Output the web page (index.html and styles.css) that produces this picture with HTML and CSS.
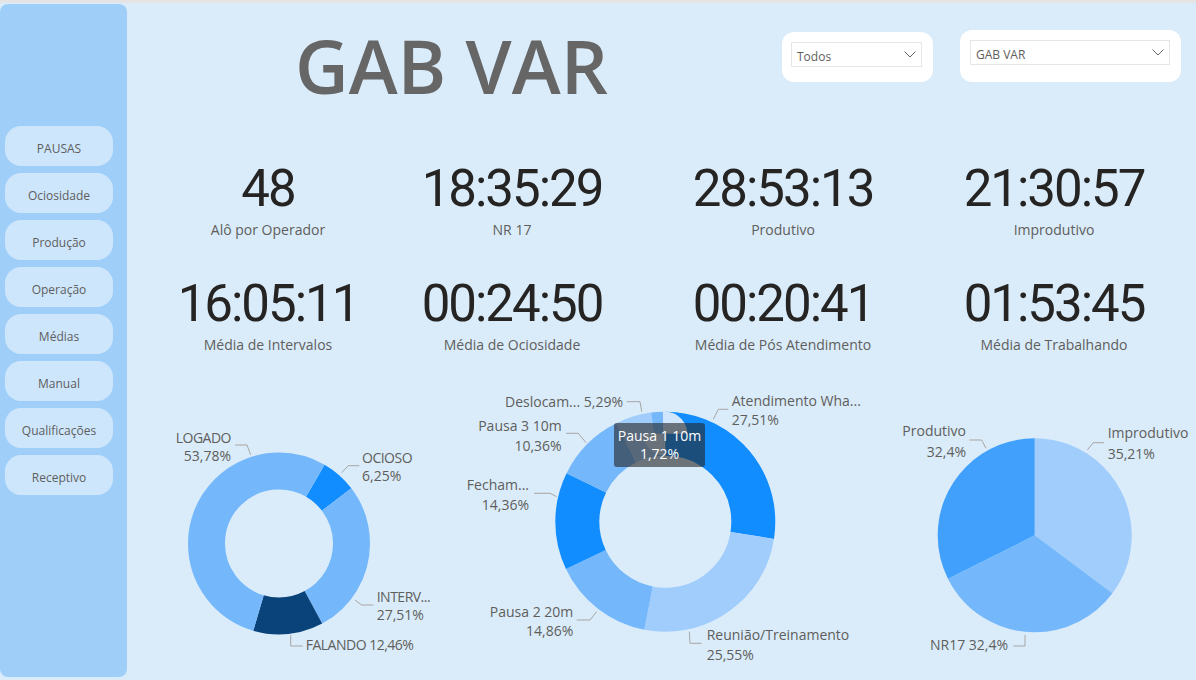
FILE: index.html
```html
<!DOCTYPE html>
<html lang="pt-BR">

<head>
  <meta charset="UTF-8">
  <meta name="viewport" content="width=device-width, initial-scale=1.0">
  <title>GAB VAR</title>
  <link rel="stylesheet" href="styles.css">
</head>

<body>
  <div class="app">
    <nav class="menu">
      <a class="menu-btn">PAUSAS</a>
      <a class="menu-btn">Ociosidade</a>
      <a class="menu-btn">Produção</a>
      <a class="menu-btn">Operação</a>
      <a class="menu-btn">Médias</a>
      <a class="menu-btn">Manual</a>
      <a class="menu-btn">Qualificações</a>
      <a class="menu-btn">Receptivo</a>
    </nav>

    <main class="painel">
      <header class="topo">
        <h1 class="titulo">GAB VAR</h1>
        <div class="filtro filtro-status">
          <div class="select">
            <span>Todos</span>
            <svg class="seta" width="12" height="7" viewBox="0 0 12 7"><path d="M0.5 0.5 L6 6 L11.5 0.5" /></svg>
          </div>
        </div>
        <div class="filtro filtro-grupo">
          <div class="select">
            <span>GAB VAR</span>
            <svg class="seta" width="12" height="7" viewBox="0 0 12 7"><path d="M0.5 0.5 L6 6 L11.5 0.5" /></svg>
          </div>
        </div>
      </header>

      <section class="kpis">
        <div class="kpi"><div class="valor">48</div><div class="rotulo">Alô por Operador</div></div>
        <div class="kpi"><div class="valor">18:35:29</div><div class="rotulo">NR 17</div></div>
        <div class="kpi"><div class="valor">28:53:13</div><div class="rotulo">Produtivo</div></div>
        <div class="kpi"><div class="valor">21:30:57</div><div class="rotulo">Improdutivo</div></div>
        <div class="kpi"><div class="valor">16:05:11</div><div class="rotulo">Média de Intervalos</div></div>
        <div class="kpi"><div class="valor">00:24:50</div><div class="rotulo">Média de Ociosidade</div></div>
        <div class="kpi"><div class="valor">00:20:41</div><div class="rotulo">Média de Pós Atendimento</div></div>
        <div class="kpi"><div class="valor">01:53:45</div><div class="rotulo">Média de Trabalhando</div></div>
      </section>

      <section class="graficos">
        <!-- status dos operadores -->
        <div class="grafico g-status">
          <svg width="300" height="300" viewBox="0 0 300 300">
            <g transform="rotate(-90 119 163.5)" fill="none" stroke-width="37">
              <circle cx="119" cy="163.5" r="72.5" pathLength="100" stroke="#118dff" stroke-dasharray="6.25 93.75" stroke-dashoffset="-8.36" />
              <circle cx="119" cy="163.5" r="72.5" pathLength="100" stroke="#74b7fb" stroke-dasharray="27.51 72.49" stroke-dashoffset="-14.61" />
              <circle cx="119" cy="163.5" r="72.5" pathLength="100" stroke="#0a437a" stroke-dasharray="12.46 87.54" stroke-dashoffset="-42.12" />
              <circle cx="119" cy="163.5" r="72.5" pathLength="100" stroke="#74b7fb" stroke-dasharray="53.78 46.22" stroke-dashoffset="-54.58" />
            </g>
            <g class="guia">
              <polyline points="75,65 87,65 90.7,75" />
              <polyline points="181.7,92.7 188.3,85.7 199.3,85.7" />
              <polyline points="195,220 201.7,225 213.3,225" />
              <polyline points="130.7,255 130.7,266 142.7,266" />
            </g>
            <g class="rot">
              <text x="71" y="63" text-anchor="end" class="caps">LOGADO</text>
              <text x="71" y="81" text-anchor="end">53,78%</text>
              <text x="202" y="83" class="caps">OCIOSO</text>
              <text x="202" y="101">6,25%</text>
              <text x="216.7" y="221.7" class="caps">INTERV...</text>
              <text x="216.7" y="240">27,51%</text>
              <text x="145.7" y="270" class="caps">FALANDO 12,46%</text>
            </g>
          </svg>
        </div>

        <!-- pausas -->
        <div class="grafico g-pausas">
          <svg width="420" height="300" viewBox="0 0 420 300">
            <g transform="rotate(-90 205.3 141.7)" fill="none" stroke-width="44">
              <circle cx="205.3" cy="141.7" r="88" pathLength="100" stroke="#118dff" stroke-dasharray="27.51 72.49" stroke-dashoffset="0" />
              <circle cx="205.3" cy="141.7" r="88" pathLength="100" stroke="#a0cdfc" stroke-dasharray="25.55 74.45" stroke-dashoffset="-27.51" />
              <circle cx="205.3" cy="141.7" r="88" pathLength="100" stroke="#74b7fb" stroke-dasharray="14.86 85.14" stroke-dashoffset="-53.06" />
              <circle cx="205.3" cy="141.7" r="88" pathLength="100" stroke="#118dff" stroke-dasharray="14.36 85.64" stroke-dashoffset="-67.92" />
              <circle cx="205.3" cy="141.7" r="88" pathLength="100" stroke="#74b7fb" stroke-dasharray="10.36 89.64" stroke-dashoffset="-82.28" />
              <circle cx="205.3" cy="141.7" r="88" pathLength="100" stroke="#a0cdfc" stroke-dasharray="5.29 94.71" stroke-dashoffset="-92.64" />
              <circle cx="205.3" cy="141.7" r="88" pathLength="100" stroke="#74b7fb" stroke-dasharray="1.72 98.28" stroke-dashoffset="-97.93" />
              <circle cx="205.3" cy="141.7" r="88" pathLength="100" stroke="#cfe6fd" stroke-dasharray="0.35 99.65" stroke-dashoffset="-99.65" />
            </g>
            <g class="guia">
              <polyline points="166.7,21.7 180,21.7 181.7,31.7" />
              <polyline points="253.3,39.3 258.3,29.3 268.3,29.3" />
              <polyline points="106,53.3 118.3,53.3 126,62.7" />
              <polyline points="74,113.3 90,113.3 96.7,116.7" />
              <polyline points="116.7,240 130,240 136.7,231.7" />
              <polyline points="229.3,251.7 230,263.3 241.7,263.3" />
            </g>
            <g class="rot">
              <text x="45" y="26.7">Deslocam... 5,29%</text>
              <text x="271.7" y="26">Atendimento Wha...</text>
              <text x="271.7" y="45">27,51%</text>
              <text x="101.7" y="50.7" text-anchor="end">Pausa 3 10m</text>
              <text x="101.7" y="70.5" text-anchor="end">10,36%</text>
              <text x="69" y="110" text-anchor="end">Fecham...</text>
              <text x="69" y="130" text-anchor="end">14,36%</text>
              <text x="113.3" y="236.7" text-anchor="end">Pausa 2 20m</text>
              <text x="113.3" y="256" text-anchor="end">14,86%</text>
              <text x="246.7" y="260">Reunião/Treinamento</text>
              <text x="246.7" y="280">25,55%</text>
            </g>
          </svg>
          <div class="tooltip">Pausa 1 10m<br>1,72%</div>
        </div>

        <!-- tempo produtivo x improdutivo -->
        <div class="grafico g-tempo">
          <svg width="316" height="300" viewBox="0 0 316 300">
            <g transform="rotate(-90 154.7 155.3)" fill="none" stroke-width="97">
              <circle cx="154.7" cy="155.3" r="48.5" pathLength="100" stroke="#a0cdfc" stroke-dasharray="35.21 64.79" stroke-dashoffset="0" />
              <circle cx="154.7" cy="155.3" r="48.5" pathLength="100" stroke="#74b7fb" stroke-dasharray="32.4 67.6" stroke-dashoffset="-35.21" />
              <circle cx="154.7" cy="155.3" r="48.5" pathLength="100" stroke="#42a0fd" stroke-dasharray="32.39 67.61" stroke-dashoffset="-67.61" />
            </g>
            <g class="guia">
              <polyline points="89.3,60 101.7,60 106,68.3" />
              <polyline points="207.3,70 213.3,62.7 224,62.7" />
              <polyline points="133.3,266 145,266 145,255" />
            </g>
            <g class="rot">
              <text x="86" y="56" text-anchor="end">Produtivo</text>
              <text x="86" y="76.7" text-anchor="end">32,4%</text>
              <text x="227.7" y="58.3">Improdutivo</text>
              <text x="227.7" y="79.3">35,21%</text>
              <text x="50" y="270">NR17 32,4%</text>
            </g>
          </svg>
        </div>
      </section>
    </main>
  </div>
</body>

</html>
```

FILE: styles.css
```css
* {
  box-sizing: border-box;
}

html,
body {
  margin: 0;
  height: 680px;
  overflow: hidden;
}

body {
  background-color: #daecfa;
  font-family: "Open Sans", "Liberation Sans", sans-serif;
  color: #605e5c;
}

.app {
  display: flex;
  height: 680px;
  border-top: 3px solid #e4e4e4;
}

/* menu lateral */
.menu {
  flex: none;
  width: 127px;
  height: 673px;
  margin-top: 1px;
  padding: 122px 0 0 5px;
  background-color: #9fcff9;
  border-radius: 8px;
  display: flex;
  flex-direction: column;
  gap: 7px;
}

.menu-btn {
  width: 108px;
  height: 40px;
  padding-top: 4px;
  border-radius: 16px;
  background-color: #cde6fc;
  display: flex;
  align-items: center;
  justify-content: center;
  font-size: 12px;
  color: #605e5c;
  cursor: pointer;
}

.painel {
  flex: 1;
  display: flex;
  flex-direction: column;
}

/* topo: titulo + filtros */
.topo {
  display: flex;
  align-items: flex-start;
  padding-right: 15px;
}

.titulo {
  margin: 26px 0 0 168px;
  font-size: 74px;
  line-height: 74px;
  font-weight: 600;
  color: #666;
}

.filtro {
  background-color: #fff;
  border-radius: 12px;
}

.filtro-status {
  width: 151px;
  height: 50px;
  margin: 29px 0 0 auto;
  padding: 10px 11px 0 9px;
}

.filtro-grupo {
  width: 221px;
  height: 52px;
  margin: 27px 0 0 27px;
  padding: 10px 11px 0 10px;
}

.select {
  height: 25px;
  padding: 3px 5px 0 5px;
  border: 1px solid #e6e6e6;
  display: flex;
  align-items: center;
  justify-content: space-between;
  font-size: 12px;
  color: #605e5c;
}

.seta {
  margin-top: -3px;
}

.seta path {
  fill: none;
  stroke: #666;
  stroke-width: 1;
}

/* cartoes de indicadores */
.kpis {
  display: grid;
  grid-template-columns: 244px 244px 298px 244px;
  row-gap: 42px;
  margin: 64px 0 0 19px;
}

.kpi {
  text-align: center;
}

.valor {
  font-family: Roboto, "DejaVu Sans", sans-serif;
  font-size: 51px;
  line-height: 44px;
  letter-spacing: -2px;
  color: #252423;
}

.rotulo {
  margin-top: 9px;
  font-size: 14px;
  line-height: 20px;
}

/* graficos */
.graficos {
  display: flex;
  margin: 25px 0 0 33px;
}

.grafico {
  position: relative;
  flex: none;
  height: 300px;
}

.grafico svg {
  display: block;
}

.g-status {
  width: 300px;
}

.g-pausas {
  width: 420px;
}

.g-tempo {
  width: 316px;
}

.guia polyline {
  fill: none;
  stroke: #a8a6a4;
  stroke-width: 1;
}

.rot text {
  font-family: "Open Sans", "Liberation Sans", sans-serif;
  font-size: 14px;
  fill: #605e5c;
}

.rot text.caps {
  letter-spacing: -0.5px;
}

.tooltip {
  position: absolute;
  left: 154px;
  top: 43px;
  width: 91px;
  height: 44px;
  padding-top: 4px;
  background-color: rgba(37, 36, 35, 0.6);
  border-radius: 3px;
  color: #fff;
  font-size: 14px;
  line-height: 18px;
  text-align: center;
}
```
